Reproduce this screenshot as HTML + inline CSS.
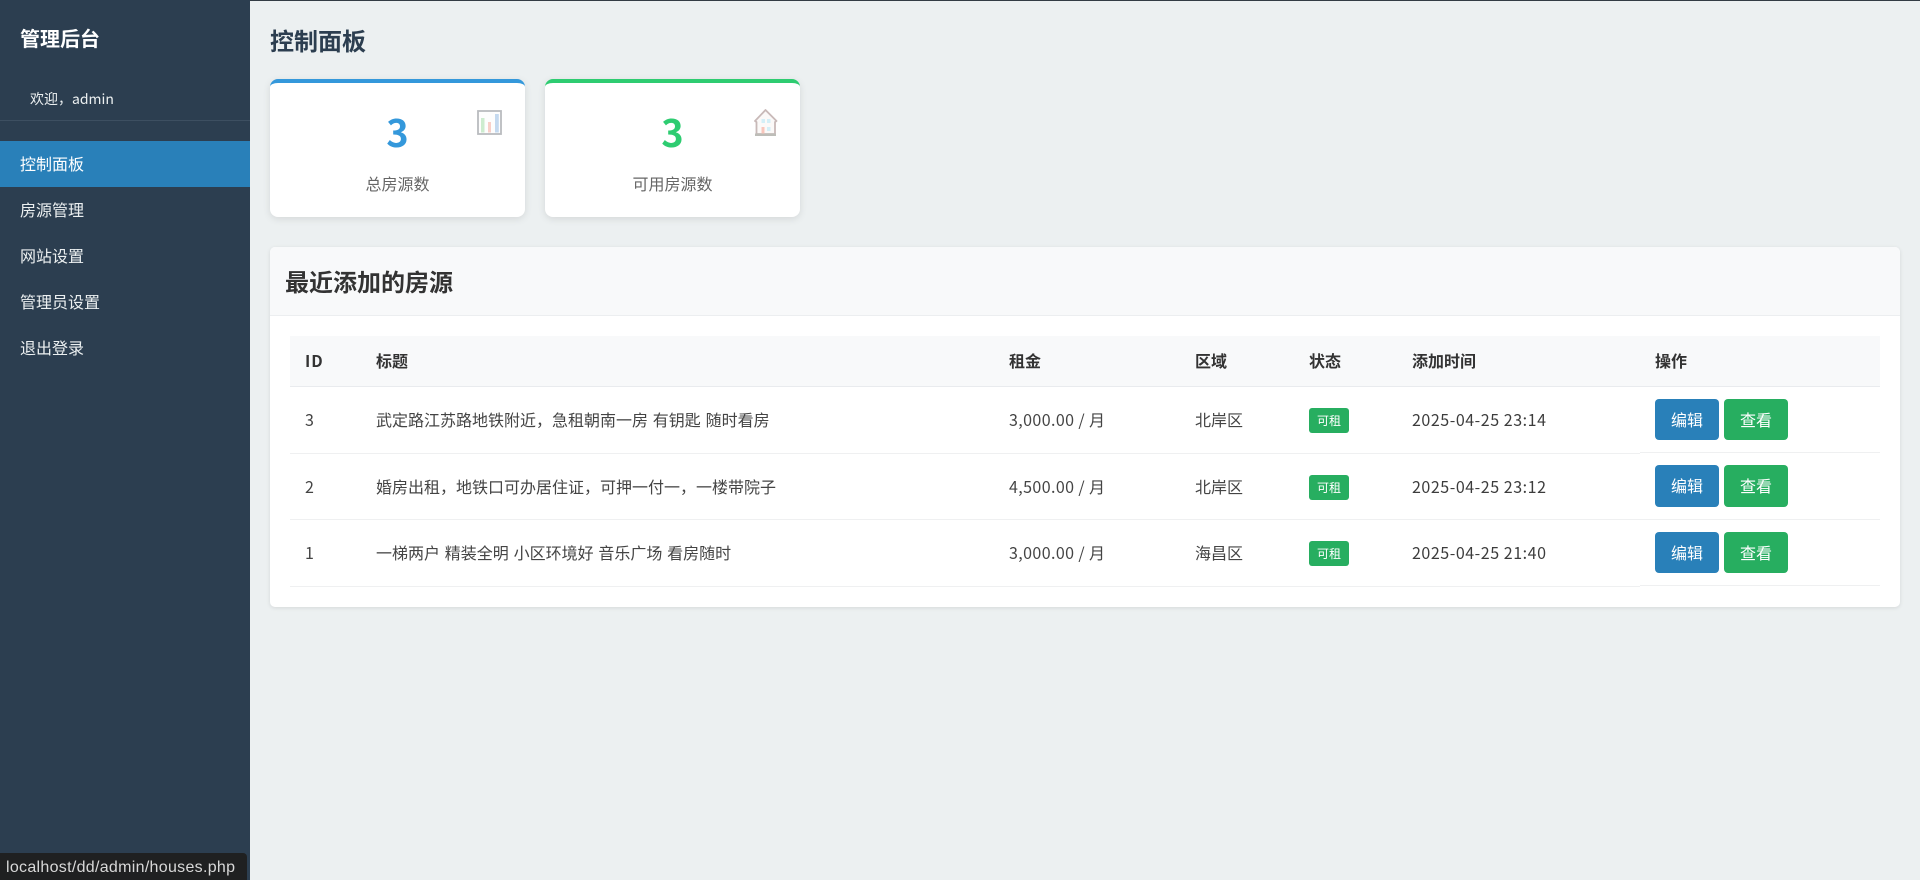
<!DOCTYPE html>
<html lang="zh-CN">
<head>
<meta charset="utf-8">
<title>控制面板</title>
<style>
*{box-sizing:border-box;margin:0;padding:0}
html,body{width:1920px;height:880px;overflow:hidden}
body{font-family:"Noto Sans CJK SC","Liberation Sans",sans-serif;background:#ecf0f1;position:relative;color:#333;font-size:16px}
.sidebar{position:absolute;left:0;top:0;width:250px;height:880px;background:#2c3e50;color:#ecf0f1}
.sidebar h2{position:absolute;left:20px;top:23px;font-size:20px;line-height:30px;color:#fff;font-weight:700}
.welcome{position:absolute;left:0;top:76px;width:250px;height:45px;padding-left:30px;border-bottom:1px solid #3d4f61;font-size:14px;line-height:46px;color:#ecf0f1}
.menu{position:absolute;left:0;top:141px;width:250px;list-style:none}
.menu li{height:46px;line-height:44px;padding-left:20px;color:#ecf0f1;font-size:16px}
.menu li.active{background:#2980b9;color:#fff}
.topline{position:absolute;left:250px;top:0;right:0;height:1px;background:#333c44}
h1{position:absolute;left:270px;top:23px;font-size:24px;line-height:34px;color:#2c3e50;font-weight:700}
.card{position:absolute;top:79px;width:255px;height:138px;background:#fff;border-radius:8px;box-shadow:0 2px 8px rgba(0,0,0,.1);border-top:4px solid #3498db;text-align:center}
.card.green{border-top-color:#2ecc71}
.num{position:absolute;left:0;right:0;top:21px;font-size:38px;line-height:54px;font-weight:700;color:#3498db}
.green .num{color:#2ecc71}
.lab{position:absolute;left:0;right:0;top:88px;font-size:16px;line-height:24px;color:#666}
.card svg{position:absolute}
.panel{position:absolute;left:270px;top:247px;width:1630px;height:360px;background:#fff;border-radius:5px;box-shadow:0 1px 4px rgba(0,0,0,.1);overflow:hidden}
.panel h3{height:69px;background:#f8f9fa;border-bottom:1px solid #eceef0;padding-left:15px;font-size:24px;line-height:68px;font-weight:700;color:#333}
table{position:absolute;left:20px;top:89px;width:1590px;border-collapse:separate;border-spacing:0;table-layout:fixed}
th{height:51px;background:#f8f9fa;text-align:left;padding:0 15px 2px;font-size:16px;font-weight:700;color:#333;border-bottom:1px solid #e9ebee}
th:first-child{letter-spacing:1px}
td{height:66px;padding:0 15px 2px;font-size:16px;color:#444;border-bottom:1px solid #eff0f1;white-space:nowrap;word-spacing:1.2px}
tr.r1 td,tr.r3 td{height:67px}
td.up{position:relative;top:-1px}
td.nb{padding-bottom:0}
tr.r1 .badge,tr.r3 .badge{position:relative;top:-1px}
.date{letter-spacing:.55px;color:#3c3c3c;word-spacing:0}
.money{letter-spacing:.4px;word-spacing:0}
.badge{display:inline-block;vertical-align:middle;width:40px;height:25px;line-height:25px;text-align:center;background:#27ae60;color:#fff;font-size:12px;border-radius:3px}
.btn{display:inline-block;vertical-align:middle;width:64px;height:41px;line-height:41px;text-align:center;color:#fff;font-size:16px;border-radius:4px;background:#2980b9;margin-right:5px}
.btn.g{background:#27ae60;margin-right:0}
tr.r2 .btn{height:42px;position:relative;top:-1px}
.btns{font-size:0;line-height:0;padding-bottom:0}
.status{position:absolute;left:0;top:853px;width:247px;height:27px;background:#1f2021;border-top-right-radius:4px;color:#d8d8d8;font-family:"Liberation Sans",sans-serif;font-size:16px;line-height:29px;padding-left:6px;letter-spacing:.3px;white-space:nowrap;overflow:hidden}
</style>
</head>
<body>
<aside class="sidebar">
  <h2>管理后台</h2>
  <div class="welcome">欢迎，admin</div>
  <ul class="menu">
    <li class="active">控制面板</li>
    <li>房源管理</li>
    <li>网站设置</li>
    <li>管理员设置</li>
    <li>退出登录</li>
  </ul>
</aside>
<div class="topline"></div>
<h1>控制面板</h1>

<div class="card" style="left:270px">
  <div class="num">3</div>
  <div class="lab">总房源数</div>
  <svg style="left:207px;top:27px" width="25" height="25" viewBox="0 0 25 25">
    <rect x="1" y="1" width="23" height="23" fill="#fdfdfd" stroke="#b9bcbf" stroke-width="1.800"/>
    <rect x="4" y="8" width="3.500" height="14.500" fill="#cdeccf"/>
    <rect x="11" y="12" width="3" height="10.500" fill="#f8cfc8"/>
    <rect x="18" y="4" width="3.800" height="18.500" fill="#c4d9ef"/>
  </svg>
</div>
<div class="card green" style="left:545px">
  <div class="num">3</div>
  <div class="lab">可用房源数</div>
  <svg style="left:209px;top:26px" width="24" height="27" viewBox="0 0 24 27">
    <path d="M11.500 1 1 12 2.500 13V25H21V13L22.500 12Z" fill="#fbf9f8" stroke="#c8b9b8" stroke-width="1.800" stroke-linejoin="round"/>
    <rect x="1" y="24.500" width="21" height="2.500" fill="#bdbdb8"/>
    <rect x="7.500" y="10" width="3.500" height="4" fill="#d3eff7"/>
    <rect x="13" y="10" width="3.500" height="4" fill="#d3eff7"/>
    <rect x="7.500" y="18" width="3" height="6.500" fill="#f8c6bc"/>
    <rect x="13" y="18" width="3.500" height="4" fill="#d3eff7"/>
  </svg>
</div>

<section class="panel">
  <h3>最近添加的房源</h3>
  <table>
    <colgroup><col style="width:71px"><col style="width:633px"><col style="width:186px"><col style="width:114px"><col style="width:103px"><col style="width:243px"><col style="width:240px"></colgroup>
    <thead><tr><th>ID</th><th>标题</th><th>租金</th><th>区域</th><th>状态</th><th>添加时间</th><th>操作</th></tr></thead>
    <tbody>
      <tr class="r1"><td>3</td><td>武定路江苏路地铁附近，急租朝南一房 有钥匙 随时看房</td><td class="money">3,000.00 / 月</td><td>北岸区</td><td class="nb"><span class="badge">可租</span></td><td class="date">2025-04-25 23:14</td><td class="up btns"><span class="btn">编辑</span><span class="btn g">查看</span></td></tr>
      <tr class="r2"><td>2</td><td>婚房出租，地铁口可办居住证，可押一付一，一楼带院子</td><td class="money">4,500.00 / 月</td><td>北岸区</td><td class="nb"><span class="badge">可租</span></td><td class="date">2025-04-25 23:12</td><td class="btns"><span class="btn">编辑</span><span class="btn g">查看</span></td></tr>
      <tr class="r3"><td>1</td><td>一梯两户 精装全明 小区环境好 音乐广场 看房随时</td><td class="money">3,000.00 / 月</td><td>海昌区</td><td class="nb"><span class="badge">可租</span></td><td class="date">2025-04-25 21:40</td><td class="up btns"><span class="btn">编辑</span><span class="btn g">查看</span></td></tr>
    </tbody>
  </table>
</section>

<div class="status">localhost/dd/admin/houses.php</div>
</body>
</html>
